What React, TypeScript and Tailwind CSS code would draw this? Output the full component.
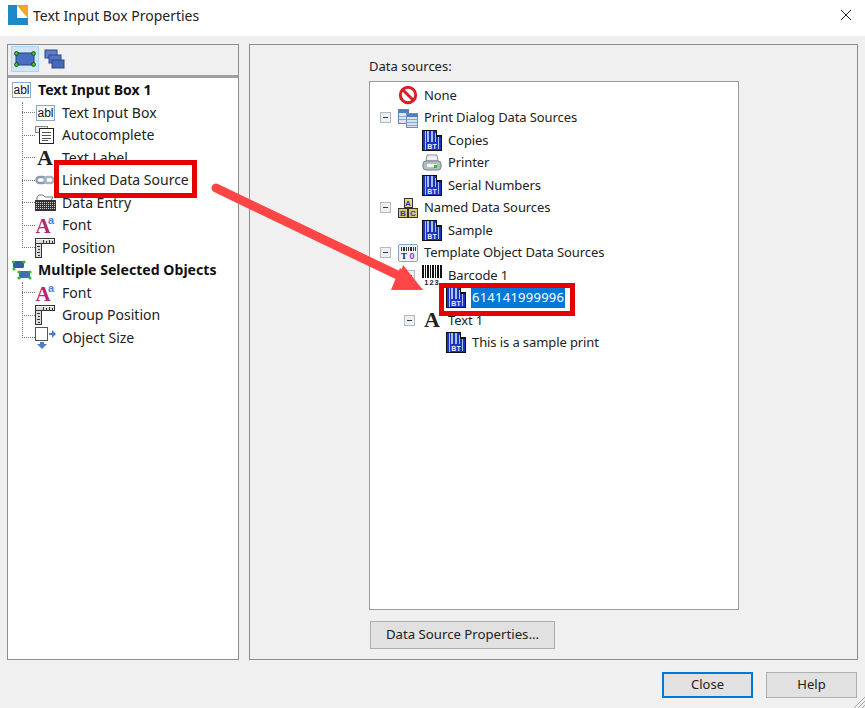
import React from "react";

const Svg = ({ w = 20, h = 20, children, className = "" }: { w?: number; h?: number; children: React.ReactNode; className?: string }) => (
  <svg width={w} height={h} viewBox={`0 0 ${w} ${h}`} className={`shrink-0 overflow-visible ${className}`} shapeRendering="crispEdges">
    {children}
  </svg>
);

const Abl = () => (
  <svg width={19} height={16} viewBox="0 0 19 16" className="shrink-0">
    <rect x="0.5" y="0.5" width="18" height="15" fill="#fff" stroke="#8aa9c4" />
    <text x="9.5" y="12" textAnchor="middle" fontSize="12" fontFamily="Liberation Sans" fill="#111" fontWeight="500">abl</text>
  </svg>
);
const Auto = () => (
  <Svg w={20} h={20}>
    <rect x="0.5" y="1.5" width="12" height="6" fill="#eee" stroke="#888" />
    <rect x="4.5" y="3.5" width="14" height="15" fill="#fff" stroke="#222" />
    <path d="M7 7h9M7 10h9M7 13h9M7 15h6" stroke="#555" />
  </Svg>
);
const BigA = ({ size = 22 }: { size?: number }) => (
  <svg width={20} height={20} viewBox="0 0 20 20" className="shrink-0 overflow-visible">
    <text x="10" y="17" textAnchor="middle" fontSize={size} fontFamily="Liberation Serif" fontWeight="700" fill="#222">A</text>
  </svg>
);
const Link = () => (
  <svg width={20} height={10} viewBox="0 0 20 10" className="shrink-0">
    <rect x="1.5" y="2" width="9" height="6" rx="3" fill="none" stroke="#8b9bb0" strokeWidth="2.4" />
    <rect x="9.5" y="2" width="9" height="6" rx="3" fill="none" stroke="#a8b3c2" strokeWidth="2.4" />
  </svg>
);
const Keyboard = () => (
  <Svg w={21} h={20}>
    <path d="M2 7V4l2-2h4l2 2h8l-2 3" stroke="#777" fill="none" shapeRendering="auto" />
    <rect x="0" y="7" width="21" height="11" fill="#333" />
    <path d="M1 9h19M1 11h19M1 13h19M1 15h19" stroke="#cfcfcf" strokeDasharray="1 1" />
  </Svg>
);
const FontI = () => (
  <svg width={20} height={20} viewBox="0 0 20 20" className="shrink-0 overflow-visible">
    <text x="8" y="18" textAnchor="middle" fontSize="21" fontFamily="Liberation Serif" fontWeight="700" fill="#b5266f">A</text>
    <text x="16" y="9" textAnchor="middle" fontSize="11" fontFamily="Liberation Sans" fontWeight="700" fill="#4a7fd6">a</text>
  </svg>
);
const Ruler = () => (
  <Svg w={20} h={20}>
    <rect x="0.5" y="0.5" width="19" height="5" fill="#ddd" stroke="#333" />
    <rect x="0.5" y="5.5" width="6" height="14" fill="#ddd" stroke="#333" />
    <path d="M8 2v3M11 3v2M14 2v3M17 3v2M2 8h3M3 11h2M2 14h3M3 17h2" stroke="#333" />
    <path d="M1 1h18" stroke="#fff" />
  </Svg>
);
const ObjSize = () => (
  <svg width={21} height={22} viewBox="0 0 21 22" className="shrink-0">
    <rect x="0.5" y="0.5" width="12" height="13" fill="#fff" stroke="#555" />
    <path d="M14 6h3V3l4 4-4 4V8h-3z" fill="#4a7fc8" />
    <path d="M5 15h4v2h3l-5 5-5-5h3z" fill="#4a7fc8" />
  </svg>
);
const Nodes = () => (
  <svg width={20} height={20} viewBox="0 0 20 20" className="shrink-0">
    <rect x="1" y="1" width="11" height="7" rx="1.5" fill="#2f5f9e" />
    <rect x="7" y="11" width="11" height="7" rx="1.5" fill="#3f6fae" />
    {[[1.5, 2], [12, 2], [2, 9], [7, 12], [18, 12], [7, 18], [18, 18]].map(([x, y], i) => (
      <circle key={i} cx={x} cy={y} r="1.6" fill="#35b835" />
    ))}
  </svg>
);
const ToolObj = () => (
  <svg width={22} height={16} viewBox="0 0 22 16" className="shrink-0">
    <rect x="2" y="2" width="18" height="12" rx="1" fill="#4a6fc0" stroke="#24407f" />
    {[[2.5, 2.5], [19.5, 2.5], [2.5, 13.5], [19.5, 13.5]].map(([x, y], i) => (
      <circle key={i} cx={x} cy={y} r="1.9" fill="#3ecb3e" stroke="#123f12" strokeWidth="0.9" />
    ))}
  </svg>
);
const ToolStack = () => (
  <svg width={21} height={20} viewBox="0 0 21 20" className="shrink-0">
    <rect x="1" y="1" width="12" height="8" fill="#5d7ec9" stroke="#2c4788" />
    <rect x="5" y="6" width="12" height="8" fill="#5174c4" stroke="#2c4788" />
    <rect x="8" y="11" width="12" height="8" fill="#4668b8" stroke="#2c4788" />
  </svg>
);

const NoneI = () => (
  <svg width={20} height={20} viewBox="0 0 20 20" className="shrink-0">
    <circle cx="10" cy="10" r="7.7" fill="#fff" stroke="#d91f26" strokeWidth="3" />
    <path d="M5 5l10 10" stroke="#d91f26" strokeWidth="3" />
  </svg>
);
const Expander = () => (
  <span className="flex h-[11px] w-[11px] shrink-0 items-center justify-center border border-[#b0b8c0] bg-[#eef0f2]">
    <span className="h-px w-[5px] bg-[#2d3f55]" />
  </span>
);
const Tables = () => (
  <Svg w={20} h={20}>
    <rect x="0.5" y="1.5" width="10" height="14" fill="#dbe6f3" stroke="#5d87b8" />
    <rect x="0.5" y="1.5" width="10" height="3" fill="#4f7fbc" />
    <rect x="8.5" y="5.5" width="11" height="14" fill="#d7e2ef" stroke="#6d8fb8" />
    <rect x="8.5" y="5.5" width="11" height="3" fill="#4f7fbc" />
    <path d="M9 11h10M9 14h10M9 17h10M1 8h7M1 11h7" stroke="#8ba7c7" />
  </Svg>
);
const Bt = () => (
  <Svg w={20} h={21}>
    <path d="M0 0h14l6 6v15H0z" fill="#111" />
    <path d="M1 1h13v6h5v13H1z" fill="#1a35c4" />
    <path d="M15 1l4 4h-4z" fill="#fff" />
    <path d="M5 1h2v11H5zM9 1h2v11H9zM13 3h1v9h-1zM16 7h1v12h-1zM3 1h1v19H3z" fill="#a9c1f0" />
    <text x="10" y="19" fontSize="7" fontFamily="Liberation Sans" fontWeight="700" fill="#e8eeff" textAnchor="middle">BT</text>
  </Svg>
);
const PrinterI = () => (
  <svg width={20} height={18} viewBox="0 0 20 18" className="shrink-0">
    <path d="M5 1h10l1 6H4z" fill="#eef0f2" stroke="#8a949c" />
    <rect x="1" y="7" width="18" height="9" rx="3" fill="#b5bdc4" stroke="#77818a" />
    <rect x="5" y="10" width="10" height="3" fill="#f5f6f7" />
    <rect x="12" y="11" width="3" height="3" fill="#2fbf2f" />
  </svg>
);
const Blocks = () => (
  <Svg w={20} h={20}>
    <rect x="6" y="0.5" width="8" height="9" fill="#e6d98a" stroke="#333" />
    <rect x="0.5" y="10" width="9" height="9.5" fill="#d8c96e" stroke="#333" />
    <rect x="10.5" y="10" width="9" height="9.5" fill="#d8c96e" stroke="#333" />
    <g fontSize="8" fontFamily="Liberation Sans" fontWeight="700" fill="#2436c8" textAnchor="middle">
      <text x="10" y="8">A</text>
      <text x="5" y="18">B</text>
      <text x="15" y="18">C</text>
    </g>
  </Svg>
);
const Template = () => (
  <Svg w={20} h={20}>
    <rect x="0.5" y="1.5" width="19" height="17" rx="2" fill="#eef2f7" stroke="#8aa5c4" />
    <path d="M3 4v4M5 4v4M6 4v4M8 4v4M10 4v4M12 4v4M13 4v4M15 4v4M17 4v4" stroke="#333" />
    <text x="6" y="16" fontSize="9" fontFamily="Liberation Serif" fontWeight="700" fill="#222" textAnchor="middle">T</text>
    <text x="14" y="16" fontSize="9" fontFamily="Liberation Sans" fontWeight="700" fill="#8a38b8" textAnchor="middle">0</text>
  </Svg>
);
const Barcode = () => (
  <Svg w={20} h={21}>
    <path d="M0 0h2v13H0zM3 0h1v13H3zM5 0h2v13H5zM8 0h1v13H8zM10 0h2v13h-2zM13 0h1v13h-1zM15 0h2v13h-2zM18 0h2v13h-2z" fill="#111" />
    <text x="10" y="20" fontSize="7.5" letterSpacing="1" fontFamily="Liberation Sans" fontWeight="700" fill="#222" textAnchor="middle">123</text>
  </Svg>
);

const LeftRoot = ({ icon, label }: { icon: React.ReactNode; label: string }) => (
  <div className="flex h-[22.5px] items-center pl-1">
    <span className="flex w-[19px] items-center justify-center">{icon}</span>
    <span className="mb-[2px] ml-[7px] text-[14.1px] font-bold text-[#111]">{label}</span>
  </div>
);
const LeftItem = ({ icon, label }: { icon: React.ReactNode; label: string }) => (
  <div className="flex h-[22.5px] items-center pl-[14px]">
    <span className="w-[13px] border-t border-dotted border-[#777]" />
    <span className="flex w-[20px] items-center justify-center">{icon}</span>
    <span className="mb-[1px] ml-[7px] text-[14px] text-[#222]">{label}</span>
  </div>
);
const LeftGroup = ({ children }: { children: React.ReactNode }) => (
  <div className="relative">
    <span className="absolute bottom-[11px] left-[14px] top-0 border-l border-dotted border-[#777]" />
    {children}
  </div>
);

const RightRow = ({ indent, expander, icon, label, selected }: { indent: number; expander?: boolean; icon: React.ReactNode; label: string; selected?: boolean }) => (
  <div className="relative flex h-[22.5px] items-center" style={{ paddingLeft: indent }}>
    {expander && <span className="absolute" style={{ left: indent - 18 }}><Expander /></span>}
    <span className="flex w-[20px] items-center justify-center">{icon}</span>
    <span className={`ml-[5px] px-[1px] text-[13px] ${selected ? "bg-[#0078d7] leading-[21px] tracking-[0.25px] text-white" : "tracking-[-0.1px] text-[#222]"}`}>{label}</span>
  </div>
);

const Tab = ({ active, children }: { active?: boolean; children: React.ReactNode }) => (
  <span className={`flex h-[26px] w-[28px] items-center justify-center border ${active ? "border-[#a8d4f5] bg-[#cfe5f8]" : "border-transparent"}`}>{children}</span>
);

export default function App() {
  return (
    <div className="relative flex h-[708px] w-[865px] flex-col overflow-hidden bg-[#f0f0f0] font-['Noto_Sans','Open_Sans',sans-serif] text-[14px]">
      <header className="flex h-[36px] shrink-0 items-center bg-white pb-[6px] pl-2 pr-[13px]">
        <svg width={20} height={20} viewBox="0 0 20 20" className="shrink-0">
          <rect width="20" height="20" fill="#1b8ac6" />
          <path d="M9 0v13h11z" fill="#fff" />
          <path d="M9 0h11v13z" fill="#f6a623" />
        </svg>
        <span className="ml-[5px] text-[14px] text-[#222]">Text Input Box Properties</span>
        <svg width={12} height={12} viewBox="0 0 12 12" className="ml-auto">
          <path d="M1 1l10 10M11 1L1 11" stroke="#222" />
        </svg>
      </header>

      <main className="box-content flex h-[616px] shrink-0 gap-[10px] pl-[7px] pr-[7px] pt-[8px]">
        <section className="flex h-[616px] w-[232px] flex-col border border-[#8e8e8e]">
          <div className="flex h-[32px] shrink-0 items-start gap-[1px] border-b-2 border-[#a0a0a0] pl-[3px] pt-[1px]">
            <Tab active><ToolObj /></Tab>
            <Tab><ToolStack /></Tab>
          </div>
          <div className="flex-1 border-t border-[#a0a0a0] bg-white pt-[1px]">
            <LeftRoot icon={<Abl />} label="Text Input Box 1" />
            <LeftGroup>
              <LeftItem icon={<Abl />} label="Text Input Box" />
              <LeftItem icon={<Auto />} label="Autocomplete" />
              <LeftItem icon={<BigA />} label="Text Label" />
              <LeftItem icon={<Link />} label="Linked Data Source" />
              <LeftItem icon={<Keyboard />} label="Data Entry" />
              <LeftItem icon={<FontI />} label="Font" />
              <LeftItem icon={<Ruler />} label="Position" />
            </LeftGroup>
            <LeftRoot icon={<Nodes />} label="Multiple Selected Objects" />
            <LeftGroup>
              <LeftItem icon={<FontI />} label="Font" />
              <LeftItem icon={<Ruler />} label="Group Position" />
              <LeftItem icon={<ObjSize />} label="Object Size" />
            </LeftGroup>
          </div>
        </section>

        <section className="flex h-[616px] w-[609px] flex-col border border-[#8e8e8e] pl-[119px] pt-[12px]">
          <div className="h-[24px] text-[13px] leading-[18px] text-[#222]">Data sources:</div>
          <div className="h-[529px] w-[370px] border border-[#9a9a9a] bg-white pt-[2px]">
            <RightRow indent={28} icon={<NoneI />} label="None" />
            <RightRow indent={28} expander icon={<Tables />} label="Print Dialog Data Sources" />
            <RightRow indent={52} icon={<Bt />} label="Copies" />
            <RightRow indent={52} icon={<PrinterI />} label="Printer" />
            <RightRow indent={52} icon={<Bt />} label="Serial Numbers" />
            <RightRow indent={28} expander icon={<Blocks />} label="Named Data Sources" />
            <RightRow indent={52} icon={<Bt />} label="Sample" />
            <RightRow indent={28} expander icon={<Template />} label="Template Object Data Sources" />
            <RightRow indent={52} expander icon={<Barcode />} label="Barcode 1" />
            <RightRow indent={76} icon={<Bt />} label="614141999996" selected />
            <RightRow indent={52} expander icon={<BigA />} label="Text 1" />
            <RightRow indent={76} icon={<Bt />} label="This is a sample print" />
          </div>
          <button className="ml-[1px] mt-[11px] h-[28px] w-[185px] border border-[#adadad] bg-[#e1e1e1] text-[13.2px] text-[#222]">Data Source Properties...</button>
        </section>
      </main>

      <footer className="flex flex-1 items-start justify-end gap-[13px] pr-[8px] pt-[12px]">
        <button className="h-[26px] w-[91px] border-2 border-[#0078d7] bg-[#e1e1e1] text-[13px] text-[#222]">Close</button>
        <button className="h-[26px] w-[91px] border border-[#adadad] bg-[#e1e1e1] text-[13px] text-[#222]">Help</button>
      </footer>

      <svg width={12} height={12} viewBox="0 0 12 12" className="absolute bottom-0 right-0">
        <path d="M1 12L12 1M5 12l7-7M9 12l3-3" stroke="#a8a8a8" />
      </svg>

      <span className="absolute left-[54px] top-[160px] h-[38px] w-[143px] border-[5px] border-[#e60000]" />
      <span className="absolute left-[439px] top-[283px] h-[33px] w-[136px] border-[5px] border-[#e60000]" />
      <svg width={865} height={708} className="pointer-events-none absolute left-0 top-0">
        <path d="M216 188L408 280" stroke="#ff4545" strokeWidth="9" strokeLinecap="round" />
        <path d="M400 268L423 290H391Z" fill="#ff4545" />
        <path d="M403 265L423 290H395Z" fill="#ff4545" />
      </svg>
    </div>
  );
}
